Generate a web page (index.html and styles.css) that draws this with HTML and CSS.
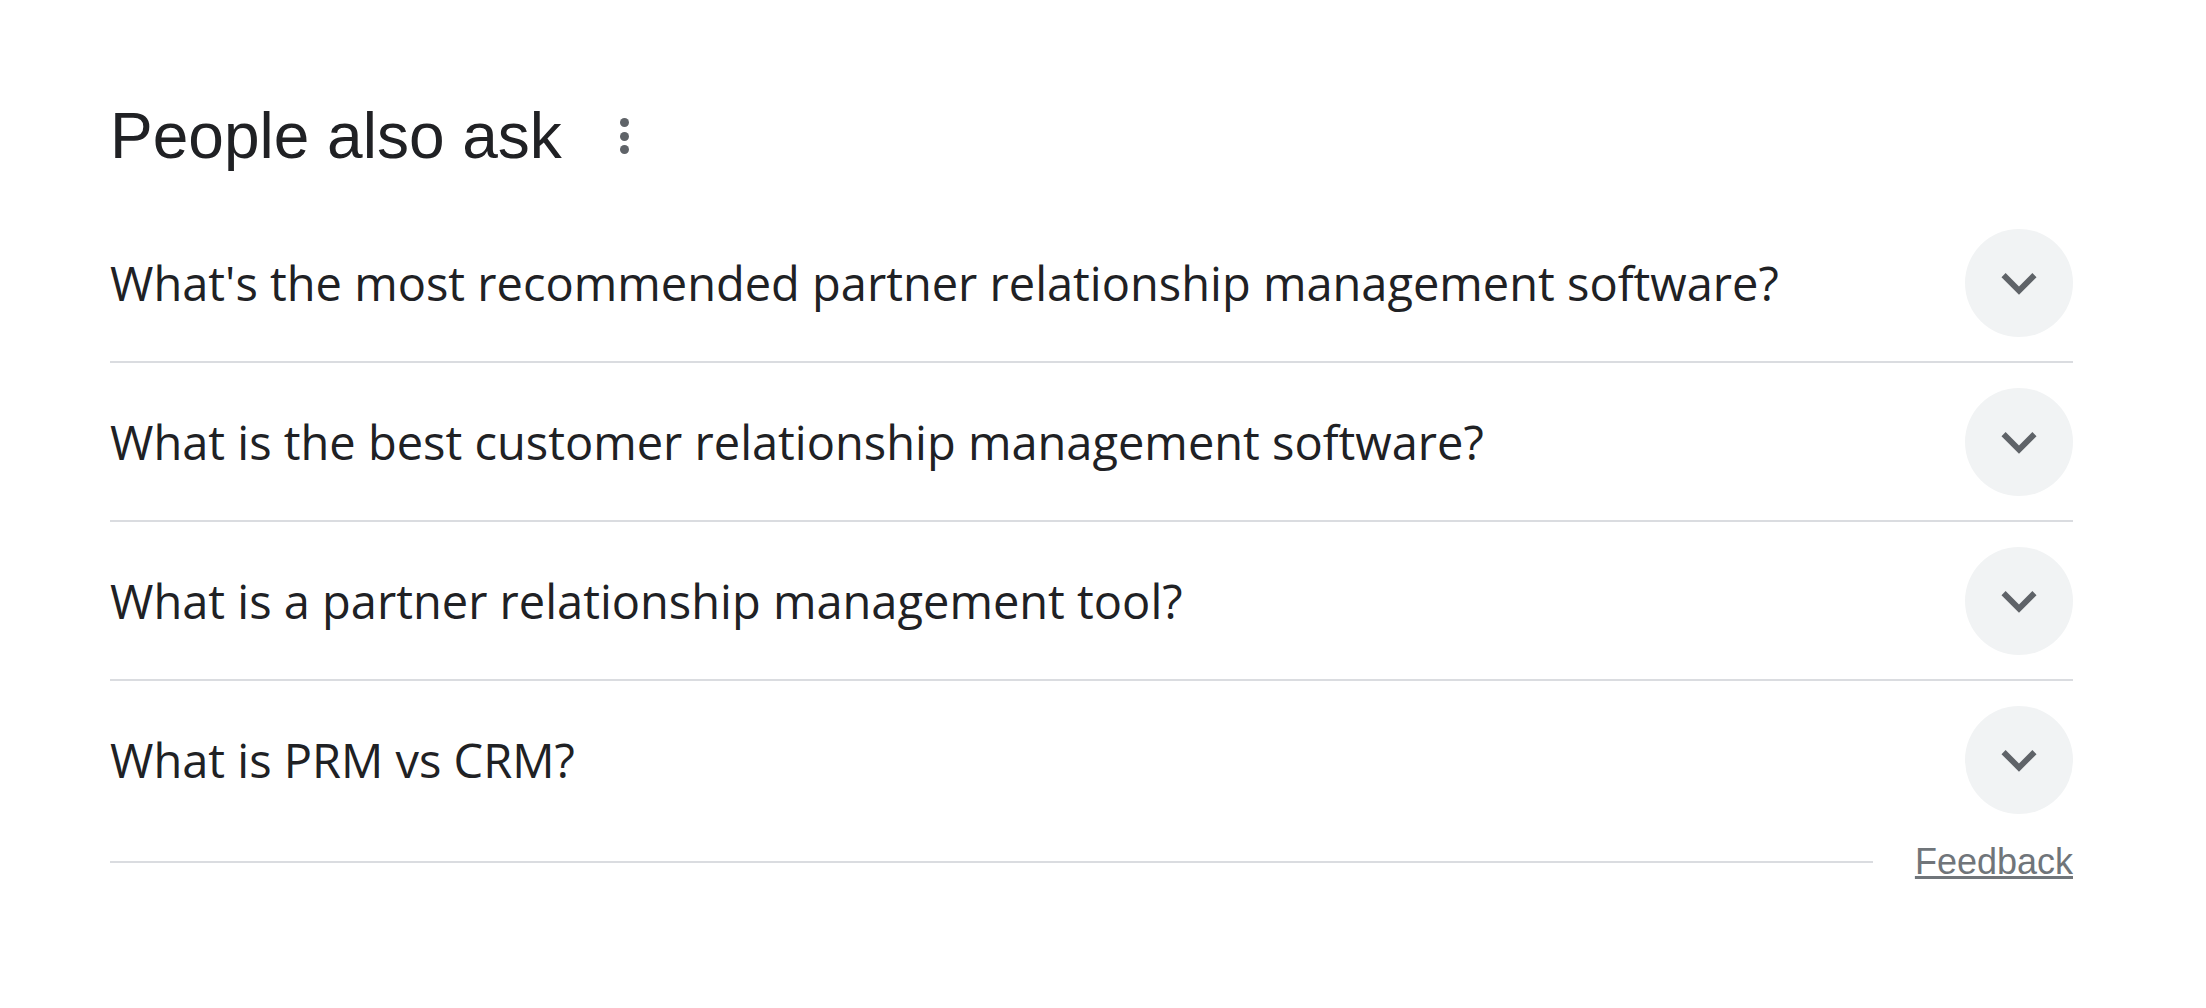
FILE: index.html
```html
<!DOCTYPE html>
<html lang="en">
<head>
<meta charset="utf-8">
<title>People also ask</title>
<link rel="stylesheet" href="styles.css">
</head>
<body>
<div class="paa">
  <div class="paa-header">
    <h2 class="paa-title">People also ask</h2>
    <span class="paa-menu" aria-label="More options"><i></i><i></i><i></i></span>
  </div>
  <div class="paa-list">
    <div class="paa-row">
      <span class="paa-q">What's the most recommended partner relationship management software?</span>
      <span class="paa-btn"><svg viewBox="0 0 24 24" width="70" height="70"><path d="M7.41 8.59 12 13.17l4.59-4.58L18 10l-6 6-6-6 1.41-1.41z"/></svg></span>
    </div>
    <div class="paa-row">
      <span class="paa-q">What is the best customer relationship management software?</span>
      <span class="paa-btn"><svg viewBox="0 0 24 24" width="70" height="70"><path d="M7.41 8.59 12 13.17l4.59-4.58L18 10l-6 6-6-6 1.41-1.41z"/></svg></span>
    </div>
    <div class="paa-row">
      <span class="paa-q">What is a partner relationship management tool?</span>
      <span class="paa-btn"><svg viewBox="0 0 24 24" width="70" height="70"><path d="M7.41 8.59 12 13.17l4.59-4.58L18 10l-6 6-6-6 1.41-1.41z"/></svg></span>
    </div>
    <div class="paa-row paa-row-last">
      <span class="paa-q">What is PRM vs CRM?</span>
      <span class="paa-btn"><svg viewBox="0 0 24 24" width="70" height="70"><path d="M7.41 8.59 12 13.17l4.59-4.58L18 10l-6 6-6-6 1.41-1.41z"/></svg></span>
    </div>
  </div>
  <div class="paa-footer">
    <span class="paa-line"></span>
    <a class="paa-feedback" href="#">Feedback</a>
  </div>
</div>
</body>
</html>
```

FILE: styles.css
```css
html, body {
  margin: 0;
  padding: 0;
  background: #ffffff;
}

body {
  font-family: "Liberation Sans", Arial, sans-serif;
  color: #202124;
}

.paa {
  width: 1963px;
  margin-left: 110px;
  padding-top: 98px;
}

.paa-header {
  display: flex;
  align-items: center;
  height: 76px;
}

.paa-title {
  margin: 0;
  font-size: 64px;
  line-height: 76px;
  font-weight: 400;
  color: #202124;
}

.paa-menu {
  display: flex;
  flex-direction: column;
  gap: 4.5px;
  margin-left: 58px;
}

.paa-menu i {
  display: block;
  width: 9px;
  height: 9px;
  border-radius: 50%;
  background: #5f6368;
}

.paa-list {
  margin-top: 30px;
}

.paa-row {
  display: flex;
  align-items: center;
  justify-content: space-between;
  height: 157px;
  border-bottom: 2px solid #dadce0;
}

.paa-row-last {
  border-bottom: none;
}

.paa-q {
  font-family: "Open Sans", "Liberation Sans", Arial, sans-serif;
  font-size: 47px;
  line-height: 60px;
  color: #202124;
}

.paa-btn {
  display: flex;
  align-items: center;
  justify-content: center;
  width: 108px;
  height: 108px;
  border-radius: 50%;
  background: #f1f3f4;
}

.paa-btn svg {
  fill: #5f6368;
}

.paa-footer {
  display: flex;
  align-items: center;
  margin-top: 3px;
}

.paa-line {
  flex: 1;
  height: 2px;
  background: #dadce0;
  margin-right: 42px;
}

.paa-feedback {
  font-size: 36px;
  color: #70757a;
  text-decoration: underline;
}
```
